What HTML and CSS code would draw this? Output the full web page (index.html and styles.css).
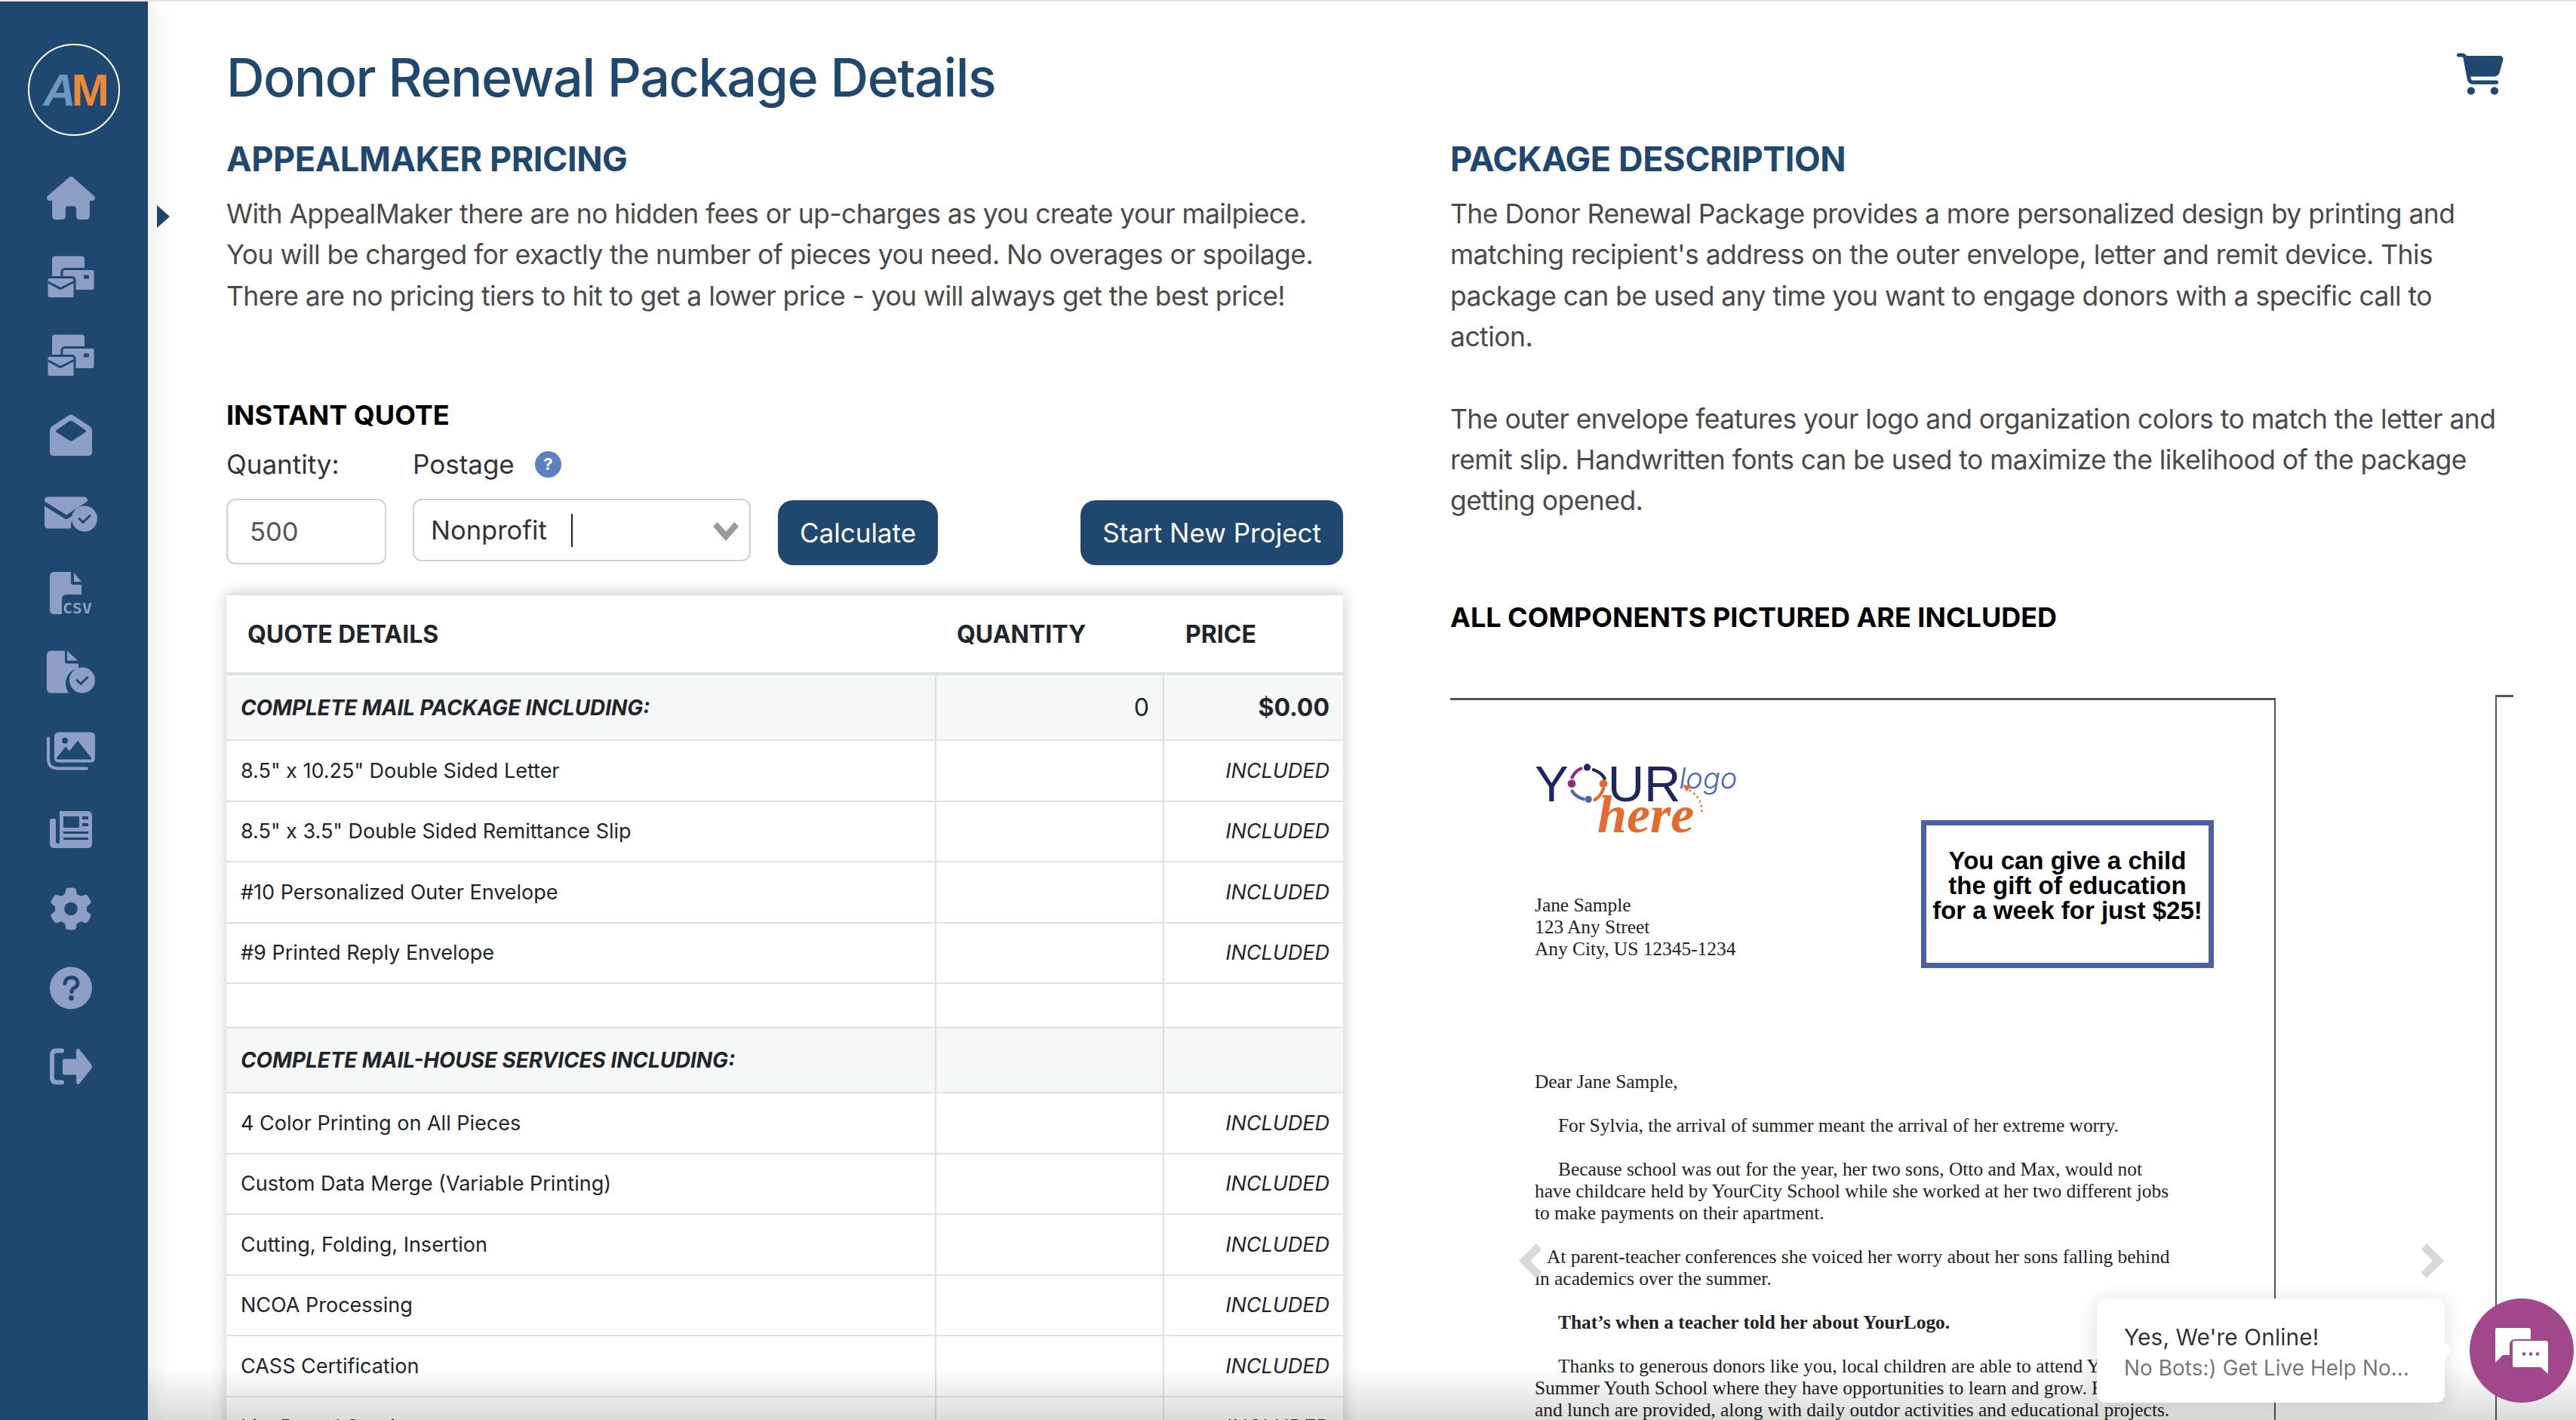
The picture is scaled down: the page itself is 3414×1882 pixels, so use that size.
FILE: index.html
```html
<!DOCTYPE html>
<html lang="en">
<head>
<meta charset="UTF-8" />
<title>Donor Renewal Package Details</title>
<link rel="stylesheet" href="styles.css">
</head>
<body>

<aside class="sidebar">
  <div class="brand"><span class="brand-a">A</span><span class="brand-m">M</span></div>
  <nav class="side-nav">
    <a href="#"><svg class="ic" viewBox="0 0 576 512"><path d="M575.8 255.5c0 18-15 32.1-32 32.1h-32l.7 160.2c0 2.7-.2 5.4-.5 8.1V472c0 22.1-17.9 40-40 40H456c-1.1 0-2.2 0-3.3-.1c-1.4 .1-2.8 .1-4.2 .1H416 392c-22.1 0-40-17.9-40-40V448 384c0-17.7-14.3-32-32-32H256c-17.7 0-32 14.3-32 32v64 24c0 22.1-17.9 40-40 40H160 128.1c-1.5 0-3-.1-4.5-.2c-1.2 .1-2.4 .2-3.6 .2H104c-22.1 0-40-17.9-40-40V360c0-.9 0-1.9 .1-2.8V287.6H32c-18 0-32-14-32-32.1c0-9 3-17 10-24L266.4 8c7-7 15-8 22-8s15 2 21 7L564.8 231.5c8 7 12 15 11 24z"/></svg></a>
    <a href="#"><svg class="ic" viewBox="0 0 64 56"><rect x="7" y="0" width="43" height="30" rx="4"/><rect x="20" y="17" width="44" height="29" rx="4" stroke="#1f4870" stroke-width="3"/><rect x="49" y="25" width="7" height="5" rx="1" fill="#1f4870"/><path d="M3 28h30q4 0 4 4v24H4q-4 0-4-4V31q0-3 3-3z" stroke="#1f4870" stroke-width="3"/><path d="M1 34l17 9 18-9" fill="none" stroke="#1f4870" stroke-width="3"/></svg></a>
    <a href="#"><svg class="ic" viewBox="0 0 64 56"><rect x="7" y="0" width="43" height="30" rx="4"/><rect x="20" y="17" width="44" height="29" rx="4" stroke="#1f4870" stroke-width="3"/><rect x="49" y="25" width="7" height="5" rx="1" fill="#1f4870"/><path d="M3 28h30q4 0 4 4v24H4q-4 0-4-4V31q0-3 3-3z" stroke="#1f4870" stroke-width="3"/><path d="M1 34l17 9 18-9" fill="none" stroke="#1f4870" stroke-width="3"/></svg></a>
    <a href="#"><svg class="ic ic-open" viewBox="0 0 56 55"><path fill-rule="evenodd" d="M25 1.500q3-2 6 0L53 16q3 2 3 5v29q0 5-5 5H5q-5 0-5-5V21q0-3 3-5zM26 9L9 21q-2 1.500 0 3l17 11q2 1 4 0l17-11q2-1.500 0-3L30 9q-2-1-4 0z"/></svg></a>
    <a href="#"><svg class="ic ic-mail" viewBox="0 0 70 46"><path d="M5 0h47q5 0 5 5v1L29 24 0 6V5q0-5 5-5zM0 12l27 17q2 1 4 0l12-8q-9 7-8 21H5q-5 0-5-5z"/><circle cx="53" cy="29" r="17"/><path d="M46 29l5 5 9-9" fill="none" stroke="#1f4870" stroke-width="3" stroke-linecap="round" stroke-linejoin="round"/></svg></a>
    <a href="#"><svg class="ic ic-csv" viewBox="0 0 56 60"><path d="M6 0h22v14q0 3 3 3h11v13H22q-6 0-6 6v20H6q-6 0-6-6V6q0-6 6-6zM32 1l10 12H32z"/><text x="17" y="55" class="csv-txt" textLength="39" lengthAdjust="spacingAndGlyphs">CSV</text></svg></a>
    <a href="#"><svg class="ic" viewBox="0 0 64 56"><path d="M6 0h18v14q0 3 3 3h15v6q-16 4-17 20q0 7 4 13H6q-6 0-6-6V6q0-6 6-6zM27 0l14 13H27z"/><circle cx="47" cy="39" r="17"/><path d="M40 39l5 5 9-9" fill="none" stroke="#1f4870" stroke-width="3" stroke-linecap="round" stroke-linejoin="round"/></svg></a>
    <a href="#"><svg class="ic" viewBox="0 0 64 50"><path fill-rule="evenodd" d="M16 0h42q6 0 6 6v28q0 6-6 6H16q-6 0-6-6V6q0-6 6-6zM13 34l12-15 5 6 11-14 18 23q1 2-1 2H15q-3 0-2-2zM24 7a4 4 0 1 0 0 8 4 4 0 0 0 0-8z"/><path d="M2 8v27q0 13 13 13h38" fill="none" stroke="#8e9fc5" stroke-width="4" stroke-linecap="round"/></svg></a>
    <a href="#"><svg class="ic ic-open" viewBox="0 0 56 49"><path fill-rule="evenodd" d="M13 0h37q6 0 6 6v37q0 6-6 6H6q-6 0-6-6V13q0-3 3-3h3q2 0 2 2v28q0 3 3 3t2-3V6q0-6 0-6zM18 7v15h21V7zM43 7v4h8V7zM43 16v4h8v-4zM18 27v3h33v-3zM18 35v3h33v-3z"/></svg></a>
    <a href="#"><svg class="ic ic-open" viewBox="0 0 512 512"><path d="M495.9 166.6c3.2 8.7 .5 18.4-6.4 24.6l-43.3 39.4c1.1 8.3 1.7 16.8 1.7 25.4s-.6 17.1-1.7 25.4l43.3 39.4c6.9 6.2 9.6 15.9 6.4 24.6c-4.4 11.9-9.7 23.3-15.8 34.3l-4.7 8.1c-6.6 11-14 21.4-22.1 31.2c-5.9 7.2-15.7 9.6-24.5 6.8l-55.7-17.700c-13.4 10.3-28.2 18.9-44 25.4l-12.5 57.1c-2 9.1-9 16.3-18.2 17.8c-13.8 2.3-28 3.5-42.5 3.5s-28.7-1.2-42.5-3.5c-9.2-1.5-16.2-8.7-18.2-17.8l-12.5-57.1c-15.8-6.5-30.6-15.1-44-25.4L83.1 425.9c-8.8 2.8-18.6 .3-24.5-6.8c-8.1-9.8-15.5-20.2-22.1-31.2l-4.7-8.1c-6.1-11-11.4-22.4-15.8-34.3c-3.2-8.7-.5-18.4 6.4-24.6l43.3-39.4C64.6 273.1 64 264.6 64 256s.6-17.1 1.7-25.4L22.4 191.2c-6.9-6.2-9.6-15.9-6.4-24.6c4.4-11.9 9.7-23.3 15.8-34.3l4.7-8.1c6.6-11 14-21.4 22.1-31.2c5.9-7.2 15.7-9.6 24.5-6.8l55.7 17.7c13.4-10.3 28.2-18.9 44-25.4l12.5-57.1c2-9.1 9-16.3 18.2-17.8C227.3 1.2 241.5 0 256 0s28.7 1.2 42.5 3.5c9.2 1.5 16.2 8.7 18.2 17.8l12.5 57.1c15.8 6.5 30.6 15.1 44 25.4l55.7-17.7c8.8-2.8 18.6-.3 24.5 6.800c8.1 9.8 15.5 20.2 22.1 31.2l4.7 8.1c6.1 11 11.4 22.4 15.8 34.3zM256 336a80 80 0 1 0 0-160 80 80 0 1 0 0 160z"/></svg></a>
    <a href="#"><svg class="ic ic-open" viewBox="0 0 56 56"><circle cx="28" cy="28" r="28"/><path d="M20 22q1-8 8.500-8t8.500 7q0 5-5 7-3 1-3 5" fill="none" stroke="#1f4870" stroke-width="5" stroke-linecap="round"/><circle cx="28.500" cy="41" r="3.500" fill="#1f4870"/></svg></a>
    <a href="#"><svg class="ic ic-open" viewBox="0 0 56 48"><path d="M16 3H9q-6 0-6 6v30q0 6 6 6h7" fill="none" stroke="#8e9fc5" stroke-width="6" stroke-linecap="round"/><path d="M36 1q1-1 3 0l16 20q2 3 0 6L39 47q-2 1-3 0-1-1-1-3v-9H20q-3 0-3-3V17q0-3 3-3h15V4q0-2 1-3z"/></svg></a>
  </nav>
</aside>

<span class="side-toggle"></span>

<main class="page">
  <header class="page-head">
    <h1>Donor Renewal Package Details</h1>
    <svg class="cart" viewBox="0 0 576 512"><path d="M0 24C0 10.7 10.7 0 24 0H69.500c22 0 41.500 12.800 50.600 32h411c26.300 0 45.500 25 38.600 50.400l-41 152.300c-8.500 31.400-37 53.300-69.500 53.300H170.700l5.400 28.500c2.200 11.300 12.100 19.500 23.600 19.500H488c13.300 0 24 10.700 24 24s-10.700 24-24 24H199.700c-34.600 0-64.300-24.600-70.700-58.500L77.400 54.500c-.7-3.800-4-6.500-7.900-6.500H24C10.700 48 0 37.300 0 24zM128 464a48 48 0 1 1 96 0 48 48 0 1 1 -96 0zm336-48a48 48 0 1 1 0 96 48 48 0 1 1 0-96z"/></svg>
  </header>

  <div class="columns">
    <section class="col-left">
      <h2>APPEALMAKER PRICING</h2>
      <p class="copy">With AppealMaker there are no hidden fees or up-charges as you create your mailpiece.<br>You will be charged for exactly the number of pieces you need. No overages or spoilage.<br>There are no pricing tiers to hit to get a lower price - you will always get the best price!</p>

      <h3 class="quote-title">INSTANT QUOTE</h3>
      <div class="quote-labels">
        <span class="lbl-qty">Quantity:</span>
        <span>Postage</span>
        <span class="help">?</span>
      </div>
      <div class="quote-form">
        <div class="field field-qty">500</div>
        <div class="field field-select">
          <span>Nonprofit</span><i class="caret"></i>
          <svg class="chev" viewBox="0 0 30 22"><path d="M0 5l5-5 10 11L25 0l5 5-15 17z"/></svg>
        </div>
        <button class="btn">Calculate</button>
        <button class="btn btn-start">Start New Project</button>
      </div>

      <table class="quote-table">
        <thead>
          <tr><th>QUOTE DETAILS</th><th>QUANTITY</th><th>PRICE</th></tr>
        </thead>
        <tbody>
          <tr class="sec first"><td>COMPLETE MAIL PACKAGE INCLUDING:</td><td class="num">0</td><td class="total">$0.00</td></tr>
          <tr><td>8.5" x 10.25" Double Sided Letter</td><td></td><td class="inc">INCLUDED</td></tr>
          <tr><td>8.5" x 3.5" Double Sided Remittance Slip</td><td></td><td class="inc">INCLUDED</td></tr>
          <tr><td>#10 Personalized Outer Envelope</td><td></td><td class="inc">INCLUDED</td></tr>
          <tr><td>#9 Printed Reply Envelope</td><td></td><td class="inc">INCLUDED</td></tr>
          <tr class="blank"><td></td><td></td><td></td></tr>
          <tr class="sec"><td>COMPLETE MAIL-HOUSE SERVICES INCLUDING:</td><td></td><td></td></tr>
          <tr><td>4 Color Printing on All Pieces</td><td></td><td class="inc">INCLUDED</td></tr>
          <tr><td>Custom Data Merge (Variable Printing)</td><td></td><td class="inc">INCLUDED</td></tr>
          <tr><td>Cutting, Folding, Insertion</td><td></td><td class="inc">INCLUDED</td></tr>
          <tr><td>NCOA Processing</td><td></td><td class="inc">INCLUDED</td></tr>
          <tr><td>CASS Certification</td><td></td><td class="inc">INCLUDED</td></tr>
          <tr><td>List Rental Service</td><td></td><td class="inc">INCLUDED</td></tr>
        </tbody>
      </table>
    </section>

    <section class="col-right">
      <h2>PACKAGE DESCRIPTION</h2>
      <p class="copy">The Donor Renewal Package provides a more personalized design by printing and matching recipient's address on the outer envelope, letter and remit device. This package can be used any time you want to engage donors with a specific call to action.</p>
      <p class="copy copy-2">The outer envelope features your logo and organization colors to match the letter and remit slip. Handwritten fonts can be used to maximize the likelihood of the package getting opened.</p>
      <h3 class="pictured">ALL COMPONENTS PICTURED ARE INCLUDED</h3>

      <div class="carousel">
        <div class="letter">
          <div class="letter-top">
            <div>
              <div class="your-logo">
                <div class="your-line">
                  <span>Y</span>
                  <svg class="your-o" viewBox="0 0 170 160"><g fill="none" stroke-width="13" stroke-linecap="round"><path d="M25 55q12-25 35-35" stroke="#8e2a83"/><path d="M25 110q12 22 45 32" stroke="#4a67b0"/><path d="M115 145q25-15 35-45" stroke="#e56a2e"/><path d="M110 25q32 10 45 35" stroke="#1d2660"/></g><circle cx="85" cy="15" r="14" fill="#1d2660"/><circle cx="23" cy="80" r="16" fill="#8e2a83"/><circle cx="90" cy="143" r="14" fill="#4a67b0"/><circle cx="150" cy="80" r="16" fill="#e56a2e"/></svg>
                  <span>UR</span><em class="your-small">logo</em>
                </div>
                <div class="your-here">here</div>
                <svg class="your-arrow" viewBox="0 0 28 42"><path d="M0 0l12 2-7 7z" fill="#e56a2e"/><path d="M9 7q19 12 16 33" fill="none" stroke="#e56a2e" stroke-width="2.500" stroke-dasharray="2.500 4"/></svg>
              </div>
              <div class="addr">Jane Sample<br>123 Any Street<br>Any City, US 12345-1234</div>
            </div>
            <div class="callout">You can give a child<br>the gift of education<br>for a week for just $25!</div>
          </div>
          <div class="letter-body">
            <p class="dear">Dear Jane Sample,</p>
            <p><span class="ind"></span>For Sylvia, the arrival of summer meant the arrival of her extreme worry.</p>
            <p><span class="ind"></span>Because school was out for the year, her two sons, Otto and Max, would not<br>have childcare held by YourCity School while she worked at her two different jobs<br>to make payments on their apartment.</p>
            <p><span class="ind ind-sm"></span>At parent-teacher conferences she voiced her worry about her sons falling behind<br>in academics over the summer.</p>
            <p><span class="ind"></span><b>That’s when a teacher told her about YourLogo.</b></p>
            <p><span class="ind"></span>Thanks to generous donors like you, local children are able to attend YourCity<br>Summer Youth School where they have opportunities to learn and grow. Breakfast<br>and lunch are provided, along with daily outdor activities and educational projects.</p>
          </div>
        </div>
        <div class="letter-next"></div>
        <svg class="arrow arrow-l" viewBox="0 0 30 46"><path d="M23 0L0 23l23 23 7-8-15-15L30 8z"/></svg>
        <svg class="arrow arrow-r" viewBox="0 0 30 46"><path d="M7 0l23 23L7 46l-7-8 15-15L0 8z"/></svg>
      </div>
    </section>
  </div>
</main>

<div class="fade-bottom"></div>

<div class="chat-card">
  <div class="chat-title">Yes, We're Online!</div>
  <div class="chat-sub">No Bots:) Get Live Help No...</div>
</div>
<div class="chat-bubble">
  <svg viewBox="0 0 70 61"><path d="M2 0h42q3 0 3 3v12H27q-8 0-8 8v13H10L0 46V2q0-2 2-2z" fill="#fff"/><path d="M26 17h41q3 0 3 3v41L60 52H26q-3 0-3-3V20q0-3 3-3z" fill="#fff"/><path d="M36 32.500h4v4h-4zM45 32.500h4v4h-4zM54 32.500h4v4h-4z" fill="#a2478c"/></svg>
</div>

</body>
</html>
```

FILE: styles.css
```css
:root {
  --navy: #1f4870;
  --icon: #8e9fc5;
  --line: #dee2e6;
  --text: #4a4a4a;
}

* { box-sizing: border-box; }

html, body {
  height: 100%;
  margin: 0;
}

body {
  font-family: 'Inter', sans-serif;
  color: var(--text);
  background: #fff;
  display: flex;
  overflow: hidden;
  border-top: 2px solid #e4e4e4;
}

/* sidebar */
.sidebar {
  width: 196px;
  flex: none;
  background: var(--navy);
  box-shadow: 0 0 36px rgba(0,0,0,0.12);
  position: relative;
  z-index: 2;
}
.brand {
  width: 122px;
  height: 122px;
  margin: 56px 0 0 37px;
  border: 2px solid #fff;
  border-radius: 50%;
  display: flex;
  align-items: center;
  justify-content: center;
  font-family: 'Liberation Sans', sans-serif;
  font-size: 60px;
  font-weight: 700;
  letter-spacing: -6px;
}
.brand-a { color: #7096c4; font-style: italic; }
.brand-m { color: #ec8a35; }

.side-nav {
  display: flex;
  flex-direction: column;
  margin-top: 30px;
}
.side-nav a {
  height: 104.7px;
  display: flex;
  align-items: center;
  padding-left: 62px;
}
.ic {
  width: 64px;
  height: 57px;
  fill: var(--icon);
}
.ic-open { width: 56px; margin-left: 4px; }
.ic-mail { width: 70px; margin-left: -3px; }
.ic-csv { width: 56px; height: 60px; margin: 4px 0 0 4px; }
.csv-txt {
  font-family: 'DejaVu Sans Mono', monospace;
  font-weight: 700;
  font-size: 20px;
}

.side-toggle {
  position: absolute;
  left: 208px;
  top: 272px;
  width: 0;
  height: 0;
  border-left: 17px solid var(--navy);
  border-top: 15px solid transparent;
  border-bottom: 15px solid transparent;
}

/* main area */
.page {
  flex: 1;
  min-width: 0;
  padding: 0 82px 0 104px;
}
.page-head {
  display: flex;
  justify-content: space-between;
  align-items: flex-start;
  height: 182px;
}
h1 {
  margin: 58px 0 0;
  font-size: 70px;
  line-height: 86px;
  font-weight: 500;
  color: var(--navy);
  letter-spacing: -1.400px;
}
.cart {
  width: 62px;
  height: 56px;
  margin: 68px 14px 0 0;
  fill: var(--navy);
}

.columns {
  display: grid;
  grid-template-columns: 1480px 1410px;
  column-gap: 142px;
}
h2 {
  margin: 0;
  font-size: 45px;
  line-height: 54px;
  font-weight: 700;
  color: var(--navy);
  letter-spacing: -0.4px;
}
.copy {
  margin: 19px 0 0;
  font-size: 35.5px;
  line-height: 54.4px;
  letter-spacing: -0.55px;
}
.copy-2 { margin-top: 54px; }

.quote-title {
  margin: 107px 0 0;
  font-size: 36px;
  line-height: 46px;
  font-weight: 700;
  color: #000;
}
.quote-labels {
  display: flex;
  align-items: center;
  margin-top: 19px;
  font-size: 35px;
  line-height: 46px;
  color: #333;
}
.lbl-qty { width: 247px; }
.help {
  width: 35px;
  height: 35px;
  margin-left: 27px;
  border-radius: 50%;
  background: #5a82c2;
  color: #fff;
  font-size: 22px;
  font-weight: 700;
  line-height: 35px;
  text-align: center;
}
.quote-form {
  display: flex;
  align-items: flex-start;
  margin-top: 23px;
}
.field {
  height: 87px;
  border: 2px solid #cfd1d6;
  border-radius: 12px;
  background: #fff;
  display: flex;
  align-items: center;
  font-size: 34.5px;
  color: #555;
}
.field-qty {
  width: 212px;
  padding-left: 29px;
  margin-right: 35px;
}
.field-select {
  width: 448px;
  height: 83px;
  padding-left: 22px;
  margin-right: 36px;
  position: relative;
  color: #333;
}
.caret {
  width: 2px;
  height: 44px;
  margin-left: 32px;
  background: #222;
}
.chev {
  position: absolute;
  right: 14px;
  top: 29px;
  width: 34px;
  height: 25px;
  fill: #999;
}
.btn {
  height: 86px;
  margin-top: 2px;
  padding: 0 29px;
  border: 0;
  border-radius: 20px;
  background: var(--navy);
  color: #fff;
  font-family: inherit;
  font-size: 35px;
  white-space: nowrap;
}
.btn-start { margin-left: auto; }

.quote-table {
  width: 100%;
  margin-top: 38px;
  border-collapse: collapse;
  table-layout: fixed;
  background: #fff;
  box-shadow: 0 0 18px rgba(0,0,0,0.22);
  font-size: 27px;
  color: #212529;
}
.quote-table th:nth-child(1), .quote-table td:nth-child(1) { width: 940px; }
.quote-table th:nth-child(2), .quote-table td:nth-child(2) { width: 302px; }
.quote-table th {
  height: 105px;
  padding: 0 28px;
  text-align: left;
  font-size: 32px;
  font-weight: 700;
  border-top: 2px solid var(--line);
  border-bottom: 4px solid var(--line);
}
.quote-table th:nth-child(2) { padding-left: 28px; }
.quote-table th:nth-child(3) { padding-left: 29px; }
.quote-table td {
  height: 80.5px;
  padding: 0 18px 0 19px;
  border-top: 2px solid var(--line);
  border-left: 2px solid var(--line);
}
.quote-table td:first-child { border-left: 0; }
.sec td { height: 86px; background: #f6f7f7; }
.sec.first td { height: 88px; border-top: 0; }
.sec td:first-child { font-size: 27.8px; font-weight: 700; font-style: italic; }
.blank td { height: 59px; }
.num { text-align: right; font-size: 32px; }
.total { text-align: right; font-weight: 700; font-size: 32px; }
.inc { text-align: right; font-style: italic; }

.pictured {
  margin: 103px 0 0;
  font-size: 36px;
  line-height: 46px;
  font-weight: 700;
  color: #000;
}

/* sample letter in the carousel */
.carousel {
  position: relative;
  display: flex;
  margin-top: 84px;
}
.letter {
  width: 1094px;
  height: 1000px;
  flex: none;
  border-top: 3px solid #555;
  border-right: 2px solid #555;
  padding: 82px 0 0 112px;
  font-family: 'Liberation Serif', serif;
  font-size: 25.4px;
  line-height: 29px;
  color: #222;
  white-space: nowrap;
}
.letter-next {
  width: 24px;
  height: 1000px;
  margin: -4px 0 0 291px;
  border-top: 3px solid #555;
  border-left: 2px solid #555;
}
.letter-top {
  display: flex;
  align-items: flex-start;
}
.your-logo {
  width: 512px;
  height: 100px;
  position: relative;
}
.your-line {
  display: flex;
  align-items: center;
  font-family: 'Liberation Sans', sans-serif;
  font-size: 67px;
  line-height: 58px;
  color: #1d2660;
}
.your-o { width: 57px; height: 53px; margin: 0 -1px 0 -4px; flex: none; }
.your-small {
  margin: -16px 0 0 -2px;
  font-family: 'Inter', sans-serif;
  font-size: 38px;
  font-weight: 300;
  color: #4a67b0;
}
.your-here {
  position: absolute;
  left: 83px;
  top: 40px;
  font-family: 'Liberation Serif', serif;
  font-size: 70px;
  font-style: italic;
  font-weight: 700;
  line-height: 60px;
  color: #e56a2e;
}
.your-arrow {
  position: absolute;
  left: 196px;
  top: 30px;
  width: 28px;
  height: 42px;
}
.addr { margin-top: 75px; }
.callout {
  width: 388px;
  height: 196px;
  margin-top: 77px;
  padding: 30px 0 0;
  border: 7px solid #4a5fa5;
  font-family: 'Liberation Sans', sans-serif;
  font-size: 33px;
  font-weight: 700;
  line-height: 33px;
  text-align: center;
  color: #000;
}
.letter-body p { margin: 0 0 29px; }
.letter-body .dear { margin-top: 136px; }
.ind { display: inline-block; width: 31px; }
.ind-sm { width: 16px; }

.arrow {
  position: absolute;
  top: 723px;
  width: 30px;
  height: 46px;
  fill: #d8d8d8;
}
.arrow-l { left: 91px; }
.arrow-r { left: 1287px; }

/* bottom fade and chat widget */
.fade-bottom {
  position: fixed;
  left: 196px;
  right: 0;
  bottom: 0;
  height: 70px;
  background: linear-gradient(rgba(0,0,0,0), rgba(0,0,0,0.14));
  pointer-events: none;
}
.chat-card {
  position: fixed;
  left: 2779px;
  top: 1721px;
  width: 461px;
  height: 138px;
  padding: 30px 36px;
  background: #fff;
  border-radius: 12px;
  box-shadow: 0 4px 30px rgba(0,0,0,0.14);
}
.chat-card:after {
  content: "";
  position: absolute;
  right: -11px;
  top: 58px;
  border-left: 11px solid #fff;
  border-top: 11px solid transparent;
  border-bottom: 11px solid transparent;
}
.chat-title {
  font-size: 30px;
  line-height: 42px;
  color: #333;
}
.chat-sub {
  font-size: 28px;
  line-height: 40px;
  color: #777;
  white-space: nowrap;
}
.chat-bubble {
  position: fixed;
  left: 3273px;
  top: 1721px;
  width: 138px;
  height: 138px;
  border-radius: 50%;
  background: #a2478c;
  display: flex;
  align-items: center;
  justify-content: center;
}
.chat-bubble svg {
  width: 70px;
  height: 61px;
}
```
